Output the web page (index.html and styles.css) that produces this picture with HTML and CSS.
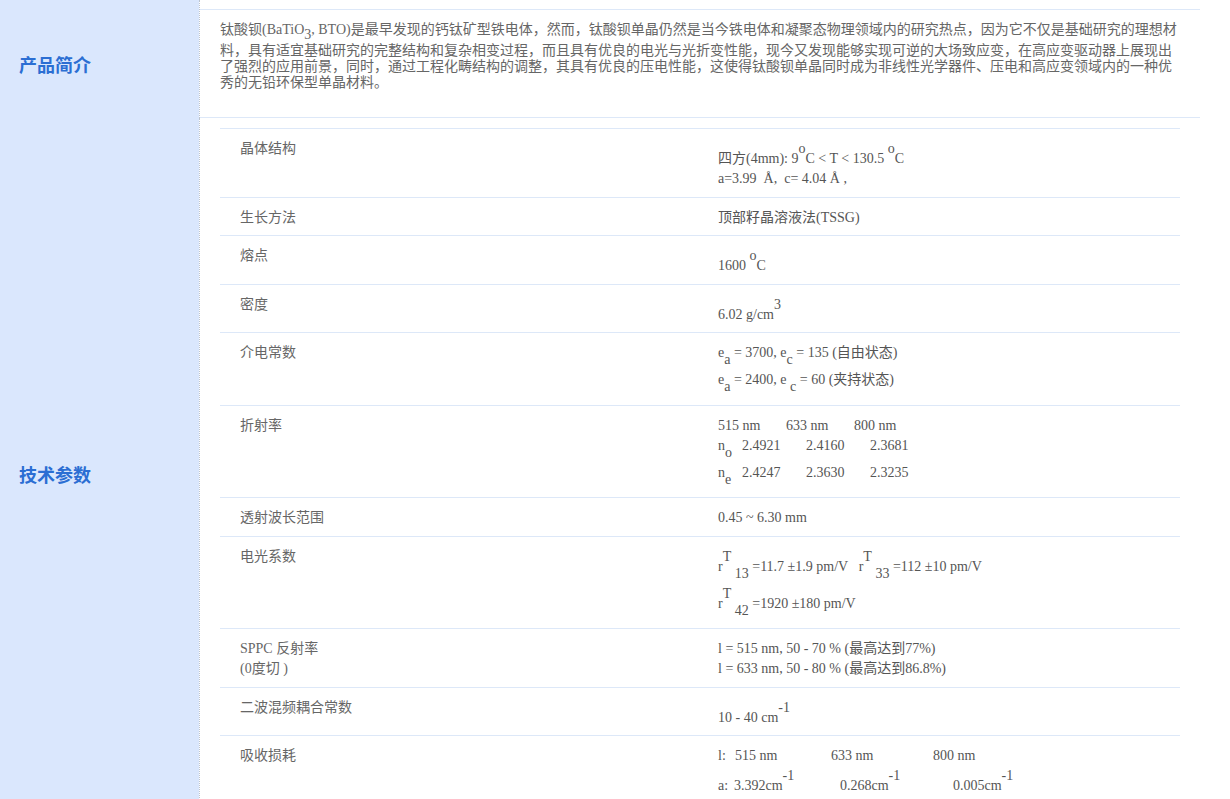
FILE: index.html
```html
<!DOCTYPE html>
<html lang="zh-CN">
<head>
<meta charset="utf-8">
<title>钛酸钡单晶</title>
<link rel="stylesheet" href="styles.css">
</head>
<body>
<div class="spec">
  <div class="side side-intro"><h2>产品简介</h2></div>
  <div class="intro">
    <p>钛酸钡(BaTiO<sub>3</sub>, BTO)是最早发现的钙钛矿型铁电体，然而，钛酸钡单晶仍然是当今铁电体和凝聚态物理领域内的研究热点，因为它不仅是基础研究的理想材料，具有适宜基础研究的完整结构和复杂相变过程，而且具有优良的电光与光折变性能，现今又发现能够实现可逆的大场致应变，在高应变驱动器上展现出了强烈的应用前景，同时，通过工程化畴结构的调整，其具有优良的压电性能，这使得钛酸钡单晶同时成为非线性光学器件、压电和高应变领域内的一种优秀的无铅环保型单晶材料。</p>
  </div>
  <div class="side"><h2>技术参数</h2></div>
  <div class="params">
    <table class="ptable">
      <colgroup><col class="k"><col></colgroup>
      <tr><td>晶体结构</td><td class="v">四方(4mm): 9<sup>o</sup>C &lt; T &lt; 130.5 <sup>o</sup>C<br>a=3.99&nbsp; Å,&nbsp; c= 4.04 Å ,</td></tr>
      <tr><td>生长方法</td><td class="v">顶部籽晶溶液法(TSSG)</td></tr>
      <tr><td>熔点</td><td class="v">1600 <sup>o</sup>C</td></tr>
      <tr><td>密度</td><td class="v">6.02 g/cm<sup>3</sup></td></tr>
      <tr><td>介电常数</td><td class="v">e<sub>a</sub> = 3700, e<sub>c</sub> = 135 (自由状态)<br>e<sub>a</sub> = 2400, e <sub>c</sub> = 60 (夹持状态)</td></tr>
      <tr><td>折射率</td><td class="v"><span class="w68">515 nm</span><span class="w68">633 nm</span>800 nm<br><span class="w24">n<sub>o</sub></span><span class="w64">2.4921</span><span class="w64">2.4160</span>2.3681<br><span class="w24">n<sub>e</sub></span><span class="w64">2.4247</span><span class="w64">2.3630</span>2.3235</td></tr>
      <tr><td>透射波长范围</td><td class="v">0.45 ~ 6.30 mm</td></tr>
      <tr><td>电光系数</td><td class="v">r<sup>T</sup> <sub>13</sub> =11.7 ±1.9 pm/V&nbsp;&nbsp; r<sup>T</sup> <sub>33</sub> =112 ±10 pm/V<br>r<sup>T</sup> <sub>42</sub> =1920 ±180 pm/V</td></tr>
      <tr><td>SPPC 反射率<br>(0度切 )</td><td class="v">l = 515 nm, 50 - 70 % (最高达到77%)<br>l = 633 nm, 50 - 80 % (最高达到86.8%)</td></tr>
      <tr><td>二波混频耦合常数</td><td class="v">10 - 40 cm<sup>-1</sup></td></tr>
      <tr><td>吸收损耗</td><td class="v"><span class="w17">l:</span><span class="w96">515 nm</span><span class="w102">633 nm</span>800 nm<br><span class="w16">a:</span><span class="w106">3.392cm<sup>-1</sup></span><span class="w113">0.268cm<sup>-1</sup></span>0.005cm<sup>-1</sup></td></tr>
    </table>
  </div>
</div>
</body>
</html>
```

FILE: styles.css
```css
* { box-sizing: border-box; }
html, body { margin: 0; padding: 0; background: #fff; }
body {
  font-family: "Liberation Serif", "Noto Sans CJK SC", serif;
  font-size: 14px;
  color: #666;
}
.spec {
  display: grid;
  grid-template-columns: 200px 1000px;
}
.side {
  background: #dae7fd;
  background-clip: padding-box;
  border-right: 1px dotted #bcc4cf;
  display: flex;
  align-items: center;
  padding-left: 19px;
}
.side-intro { padding-top: 10px; }
.side h2 {
  margin: 0;
  font-family: "Noto Sans CJK SC", sans-serif;
  font-size: 18px;
  font-weight: 700;
  color: #2b6ed3;
  letter-spacing: 0;
}
.intro {
  margin-top: 9px;
  border-top: 1px solid #dde8f8;
  border-bottom: 1px solid #dde8f8;
  padding: 12px 20px 26px;
}
.intro p { margin: 0; line-height: 16px; }
.intro sub { font-size: inherit; vertical-align: -5px; line-height: 16px; }
.params { padding: 10px 20px 26px; }
.ptable {
  width: 100%;
  border-collapse: collapse;
  table-layout: fixed;
}
.ptable col.k { width: 478px; }
.ptable td {
  border-top: 1px solid #dde8f8;
  padding: 10px 20px 7.5px;
  vertical-align: top;
  line-height: 20px;
}
.ptable td.v { color: #555; }
.ptable sup { font-size: inherit; vertical-align: 10px; line-height: 20px; }
.ptable sub { font-size: inherit; vertical-align: -7px; line-height: 20px; }
.w16, .w17, .w24, .w64, .w68, .w96, .w102, .w106, .w113 { display: inline-block; }
.w16 { width: 16px; }
.w17 { width: 17px; }
.w24 { width: 24px; }
.w64 { width: 64px; }
.w68 { width: 68px; }
.w96 { width: 96px; }
.w102 { width: 102px; }
.w106 { width: 106px; }
.w113 { width: 113px; }
```
